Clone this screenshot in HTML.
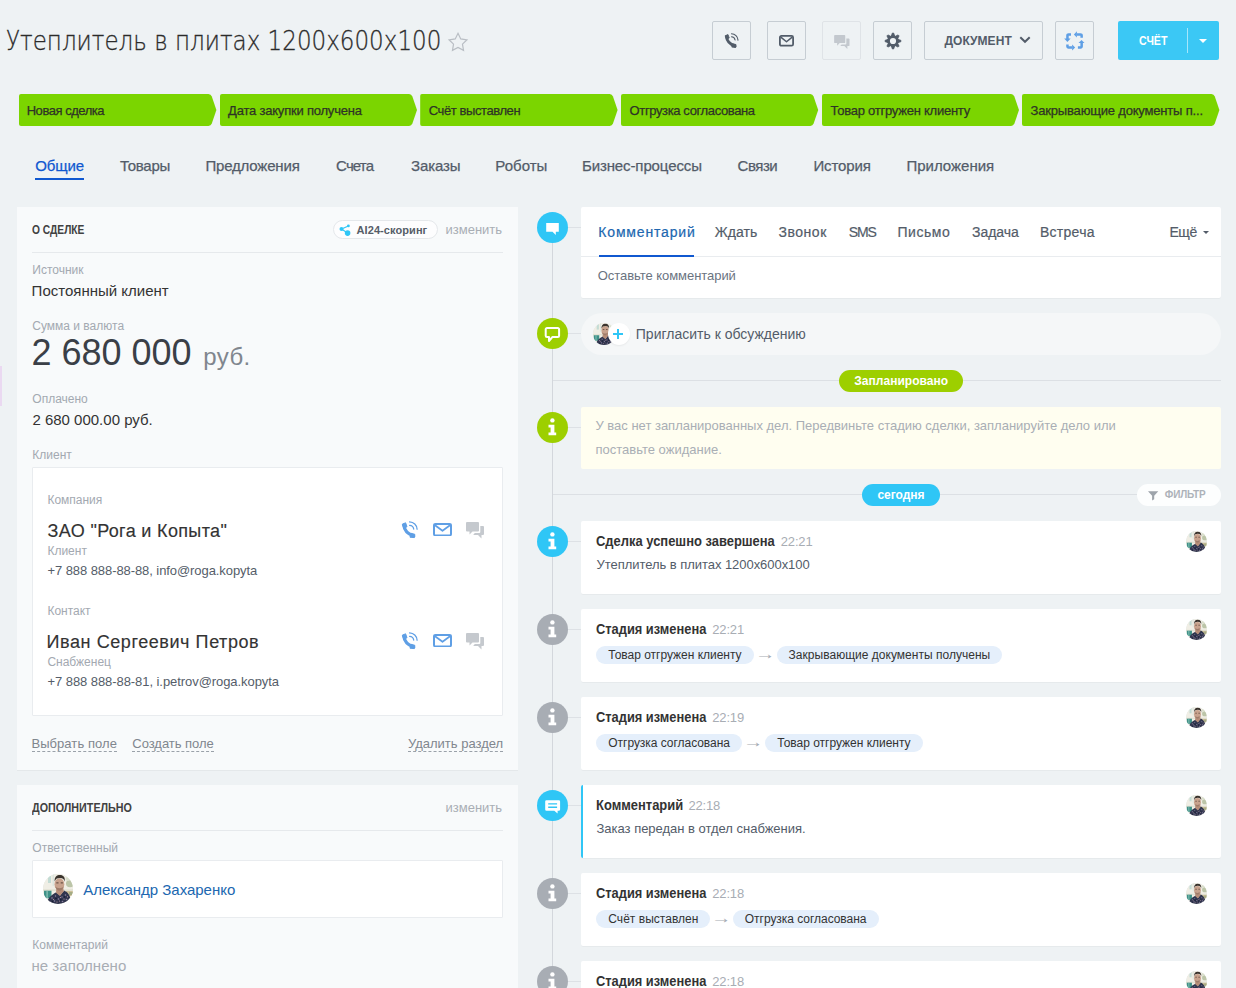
<!DOCTYPE html>
<html lang="ru">
<head>
<meta charset="utf-8">
<title>Утеплитель в плитах 1200x600x100</title>
<style>
*{box-sizing:border-box;margin:0;padding:0}
html,body{width:1236px;height:988px;overflow:hidden}
body{position:relative;background:#eef2f4;font-family:"Liberation Sans",sans-serif;color:#333}
.t{position:absolute;white-space:nowrap;display:block;font-style:normal;font-weight:400;text-decoration:none}
.a{position:absolute;display:block}
.btn{position:absolute;top:21px;height:39px;border:1px solid #c6cdd3;border-radius:2px}
.stage{position:absolute;top:94px;height:32px;width:198px;background:#7bd500;border-radius:2px 0 0 2px;clip-path:polygon(0 0,189.500px 0,191.500px .8px,192.800px 2.500px,197.400px 16px,192.800px 29.500px,191.500px 31.200px,189.500px 32px,0 32px)}
.panel{position:absolute;left:17px;width:501px;background:#f8fafb;box-shadow:0 1px 0 rgba(0,0,0,.04)}
.hr{position:absolute;left:32px;width:471px;height:1px;background:#e6e9ec}
.box{position:absolute;left:32px;width:471px;background:#fff;border:1px solid #e9ecef;border-radius:1px}
.card{position:absolute;left:581px;width:640px;background:#fff;border-radius:2px;box-shadow:0 1px 0 rgba(0,0,0,.03)}
.ic{position:absolute;left:537px;width:31px;height:31px;border-radius:50%}
.conn{position:absolute;left:568px;width:13px;height:1px;background:#dde1e5}
.hl{position:absolute;left:553px;width:668px;height:1px;background:#dce0e4}
.pill{position:absolute;border-radius:11px;height:22px}
.chip{position:absolute;height:18px;border-radius:9px;background:#e5effb}
.av{position:absolute;border-radius:50%;overflow:hidden;background:#dfe5e1}
.av svg{display:block;width:100%;height:100%}
.dash{border-bottom:1px dashed #9aa1a9}
</style>
</head>
<body>
<header>
<h1 class="t" style="left:6.15px;top:25.00px;font-size:27px;line-height:31px;color:#2b2b2b;font-weight:200;transform:scaleX(0.8527);transform-origin:0 0;font-family:'DejaVu Sans','Liberation Sans',sans-serif;-webkit-text-stroke:.3px;">Утеплитель в плитах 1200x600x100</h1>
<svg class="a" style="left:447px;top:31px" width="22" height="23" viewBox="0 0 22 23"><path d="M11.00 2.30L13.76 7.90L19.94 8.80L15.47 13.15L16.53 19.30L11.00 16.40L5.47 19.30L6.53 13.15L2.06 8.80L8.24 7.90z" fill="none" stroke="#b9bec4" stroke-width="1.200" stroke-linejoin="miter"/></svg>
<div class="btn" style="left:712px;width:39px"></div>
<svg class="a" style="left:724px;top:32.8px" width="14.80" height="15.67" viewBox="0 0 17 18"><path d="M2.800 4.200Q3.400 11.800 12.800 15.200" fill="none" stroke="#525c69" stroke-width="3.200" stroke-linecap="round"/><path d="M1.300 3.200L4.600 1.800L6 5.800L2.800 7.200zM9.700 12.200L13.800 13.300L13.200 16.600L9 16.200z" fill="#525c69" stroke="#525c69" stroke-width="1" stroke-linejoin="round"/><path d="M8.600 4.300a4.300 4.300 0 0 1 4.100 3.700M8.600 .900a7.700 7.700 0 0 1 7.500 7.300" fill="none" stroke="#525c69" stroke-width="1.3" stroke-linecap="round"/></svg>
<div class="btn" style="left:767px;width:39px"></div>
<svg class="a" style="left:779.3px;top:35px" width="15" height="11.6" viewBox="0 0 15 11.6"><rect x="0.9" y="0.9" width="13.2" height="9.799999999999999" rx="1.500" fill="none" stroke="#525c69" stroke-width="1.8"/><path d="M1.8 2.1L7.5 6.73L13.2 2.1" fill="none" stroke="#525c69" stroke-width="1.53" stroke-linejoin="round"/></svg>
<div class="btn" style="left:822px;width:39px;border-color:#dfe3e7"></div>
<svg class="a" style="left:833.5px;top:35px" width="16.5" height="14.5" viewBox="0 0 19 17"><path d="M1 0h11a1 1 0 0 1 1 1v7.500a1 1 0 0 1-1 1H6.500L3.500 12.500V9.500H1a1 1 0 0 1-1-1V1a1 1 0 0 1 1-1z" fill="#c3c8ce"/><path d="M14.300 4h2.700a1 1 0 0 1 1 1v7a1 1 0 0 1-1 1h-1.500v3.500L12 13H7.200l1.600-2H13.300a1 1 0 0 0 1-1z" fill="#c3c8ce"/></svg>
<div class="btn" style="left:873px;width:39px"></div>
<svg class="a" style="left:884px;top:32px" width="18" height="18" viewBox="-9 -9 18 18"><g fill="#525c69" stroke="#525c69" stroke-width=".8" stroke-linejoin="round"><path d="M-1.600-5l.9-2.900h1.400L1.600-5z" transform="rotate(0)"/><path d="M-1.600-5l.9-2.900h1.400L1.600-5z" transform="rotate(45)"/><path d="M-1.600-5l.9-2.900h1.400L1.600-5z" transform="rotate(90)"/><path d="M-1.600-5l.9-2.900h1.400L1.600-5z" transform="rotate(135)"/><path d="M-1.600-5l.9-2.900h1.400L1.600-5z" transform="rotate(180)"/><path d="M-1.600-5l.9-2.900h1.400L1.600-5z" transform="rotate(225)"/><path d="M-1.600-5l.9-2.900h1.400L1.600-5z" transform="rotate(270)"/><path d="M-1.600-5l.9-2.900h1.400L1.600-5z" transform="rotate(315)"/></g><circle r="4.450" fill="none" stroke="#525c69" stroke-width="2.700"/></svg>
<div class="btn" style="left:924px;width:119px"></div>
<span class="t" style="left:944.40px;top:34.00px;font-size:12px;line-height:14px;color:#535c69;font-weight:700;letter-spacing:0.052px;">ДОКУМЕНТ</span>
<svg class="a" style="left:1018px;top:35px" width="14" height="10" viewBox="0 0 14 10"><path d="M2.300 2.200L7 6.800l4.700-4.600" fill="none" stroke="#535c69" stroke-width="2"/></svg>
<div class="btn" style="left:1055px;width:39px"></div>
<svg class="a" style="left:1064px;top:31px" width="21" height="20" viewBox="0 0 21 20"><g fill="none" stroke="#5f9fe5" stroke-width="2.500"><path d="M7 3.450H4.450a1 1 0 0 0-1 1V8"/><path d="M12.900 3.450h3.750a1 1 0 0 1 1 1V6.800"/><path d="M17.650 12v3.450a1 1 0 0 1-1 1H13.900"/><path d="M3.450 13.500v1.950a1 1 0 0 0 1 1H8.100"/></g><g fill="#5f9fe5"><path d="M.2 7.500h6.400L3.400 11z"/><path d="M12.900.2v6.400L9.900 3.450z"/><path d="M14.500 12h6L17.550 9z"/><path d="M8.100 13.500v6l3-3.050z"/></g></svg>
<div class="a" style="left:1118px;top:21px;width:101px;height:39px;background:#3bc8f5;border-radius:2px"></div>
<div class="a" style="left:1187px;top:28px;width:1px;height:25px;background:rgba(255,255,255,.55)"></div>
<span class="t" style="left:1139.20px;top:34.00px;font-size:12px;line-height:14px;color:#fff;font-weight:700;transform:scaleX(0.8834);transform-origin:0 0;">СЧЁТ</span>
<div class="a" style="left:1198.500px;top:38.500px;width:0;height:0;border:4.500px solid transparent;border-top:4.500px solid #fff;border-bottom:0"></div>
</header>
<nav>
<div class="stage" style="left:19px"></div>
<span class="t" style="left:26.70px;top:103.00px;font-size:13px;line-height:15px;color:#2e3326;letter-spacing:-0.464px;-webkit-text-stroke:.25px;">Новая сделка</span>
<div class="stage" style="left:219.6px"></div>
<span class="t" style="left:228.10px;top:103.00px;font-size:13px;line-height:15px;color:#2e3326;letter-spacing:-0.209px;-webkit-text-stroke:.25px;">Дата закупки получена</span>
<div class="stage" style="left:420.2px"></div>
<span class="t" style="left:428.80px;top:103.00px;font-size:13px;line-height:15px;color:#2e3326;letter-spacing:-0.417px;-webkit-text-stroke:.25px;">Счёт выставлен</span>
<div class="stage" style="left:620.8px"></div>
<span class="t" style="left:629.60px;top:103.00px;font-size:13px;line-height:15px;color:#2e3326;letter-spacing:-0.377px;-webkit-text-stroke:.25px;">Отгрузка согласована</span>
<div class="stage" style="left:821.6px"></div>
<span class="t" style="left:830.50px;top:103.00px;font-size:13px;line-height:15px;color:#2e3326;letter-spacing:-0.241px;-webkit-text-stroke:.25px;">Товар отгружен клиенту</span>
<div class="stage" style="left:1022px"></div>
<span class="t" style="left:1030.60px;top:103.00px;font-size:13px;line-height:15px;color:#2e3326;letter-spacing:-0.184px;-webkit-text-stroke:.25px;">Закрывающие документы п...</span>
<a class="t" style="left:35.30px;top:157.00px;font-size:15px;line-height:17px;color:#1058d0;letter-spacing:-0.120px;-webkit-text-stroke:.25px;">Общие</a>
<a class="t" style="left:119.90px;top:157.00px;font-size:15px;line-height:17px;color:#535c69;letter-spacing:-0.224px;-webkit-text-stroke:.25px;">Товары</a>
<a class="t" style="left:205.40px;top:157.00px;font-size:15px;line-height:17px;color:#535c69;letter-spacing:-0.172px;-webkit-text-stroke:.25px;">Предложения</a>
<a class="t" style="left:336.10px;top:157.00px;font-size:15px;line-height:17px;color:#535c69;letter-spacing:-0.856px;-webkit-text-stroke:.25px;">Счета</a>
<a class="t" style="left:411.10px;top:157.00px;font-size:15px;line-height:17px;color:#535c69;letter-spacing:-0.149px;-webkit-text-stroke:.25px;">Заказы</a>
<a class="t" style="left:495.30px;top:157.00px;font-size:15px;line-height:17px;color:#535c69;letter-spacing:0.028px;-webkit-text-stroke:.25px;">Роботы</a>
<a class="t" style="left:581.90px;top:157.00px;font-size:15px;line-height:17px;color:#535c69;letter-spacing:-0.107px;-webkit-text-stroke:.25px;">Бизнес-процессы</a>
<a class="t" style="left:737.60px;top:157.00px;font-size:15px;line-height:17px;color:#535c69;letter-spacing:-0.483px;-webkit-text-stroke:.25px;">Связи</a>
<a class="t" style="left:813.40px;top:157.00px;font-size:15px;line-height:17px;color:#535c69;letter-spacing:-0.108px;-webkit-text-stroke:.25px;">История</a>
<a class="t" style="left:906.40px;top:157.00px;font-size:15px;line-height:17px;color:#535c69;letter-spacing:0.007px;-webkit-text-stroke:.25px;">Приложения</a>
<div class="a" style="left:35px;top:178px;width:49px;height:2px;background:#1058d0"></div>
</nav>
<aside>
<div class="a" style="left:0;top:366px;width:2px;height:40px;background:#ead9f1"></div>
<section class="panel" style="top:207px;height:563px"></section>
<span class="t" style="left:32.30px;top:223.00px;font-size:12px;line-height:14px;color:#414141;font-weight:700;transform:scaleX(0.8524);transform-origin:0 0;">О СДЕЛКЕ</span>
<div class="a" style="left:333px;top:220px;width:104.500px;height:19px;border:1px solid #e5e8eb;border-radius:10px;background:#fdfdfe"></div>
<svg class="a" style="left:338.500px;top:223.500px" width="13" height="13" viewBox="0 0 13 13"><path d="M2.500 5L9.400 1.900M2.500 5l6 4" stroke="#2fc6f6" stroke-width="1.100"/><circle cx="2.500" cy="5" r="2" fill="#2fc6f6"/><circle cx="9.400" cy="1.900" r="1.400" fill="#2fc6f6"/><circle cx="8.600" cy="9.100" r="2.800" fill="#2fc6f6"/></svg>
<span class="t" style="left:356.60px;top:224.00px;font-size:11px;line-height:12px;color:#565d68;font-weight:700;letter-spacing:0.071px;">AI24-скоринг</span>
<span class="t" style="left:445.60px;top:222.00px;font-size:13px;line-height:15px;color:#a9aeb5;letter-spacing:-0.026px;">изменить</span>
<div class="hr" style="top:252px"></div>
<span class="t" style="left:32.30px;top:263.00px;font-size:12px;line-height:14px;color:#a3a9b1;">Источник</span>
<span class="t" style="left:31.60px;top:282.00px;font-size:15px;line-height:17px;color:#333;">Постоянный клиент</span>
<span class="t" style="left:32.30px;top:319.00px;font-size:12px;line-height:14px;color:#a3a9b1;">Сумма и валюта</span>
<span class="t" style="left:31.40px;top:332.00px;font-size:36px;line-height:41px;color:#3a3f47;letter-spacing:-0.017px;">2 680 000</span>
<span class="t" style="left:203.20px;top:343.00px;font-size:24px;line-height:27px;color:#80868e;letter-spacing:0.435px;">руб.</span>
<span class="t" style="left:32.30px;top:392.00px;font-size:12px;line-height:14px;color:#a3a9b1;">Оплачено</span>
<span class="t" style="left:32.40px;top:411.00px;font-size:15px;line-height:17px;color:#333;">2 680 000.00 руб.</span>
<span class="t" style="left:32.30px;top:448.00px;font-size:12px;line-height:14px;color:#a3a9b1;">Клиент</span>
<div class="box" style="top:467px;height:249px"></div>
<span class="t" style="left:47.40px;top:493.00px;font-size:12px;line-height:14px;color:#a3a9b1;">Компания</span>
<span class="t" style="left:47.60px;top:521.00px;font-size:18px;line-height:20px;color:#333;letter-spacing:0.346px;-webkit-text-stroke:.15px;">ЗАО &quot;Рога и Копыта&quot;</span>
<span class="t" style="left:47.40px;top:544.00px;font-size:12px;line-height:14px;color:#a3a9b1;">Клиент</span>
<span class="t" style="left:47.50px;top:563.00px;font-size:13px;line-height:15px;color:#555d69;letter-spacing:-0.078px;">+7 888 888-88-88, info@roga.kopyta</span>
<span class="t" style="left:47.40px;top:604.00px;font-size:12px;line-height:14px;color:#a3a9b1;">Контакт</span>
<span class="t" style="left:46.60px;top:632.00px;font-size:18px;line-height:20px;color:#333;letter-spacing:0.571px;-webkit-text-stroke:.15px;">Иван Сергеевич Петров</span>
<span class="t" style="left:47.40px;top:655.00px;font-size:12px;line-height:14px;color:#a3a9b1;">Снабженец</span>
<span class="t" style="left:47.50px;top:674.00px;font-size:13px;line-height:15px;color:#555d69;letter-spacing:-0.066px;">+7 888 888-88-81, i.petrov@roga.kopyta</span>
<svg class="a" style="left:400.5px;top:520.5px" width="17.00" height="18.00" viewBox="0 0 17 18"><path d="M2.800 4.200Q3.400 11.800 12.800 15.200" fill="none" stroke="#5f9fe5" stroke-width="3.200" stroke-linecap="round"/><path d="M1.300 3.200L4.600 1.800L6 5.800L2.800 7.200zM9.700 12.200L13.800 13.300L13.200 16.600L9 16.200z" fill="#5f9fe5" stroke="#5f9fe5" stroke-width="1" stroke-linejoin="round"/><path d="M8.600 4.300a4.300 4.300 0 0 1 4.100 3.700M8.600 .900a7.700 7.700 0 0 1 7.500 7.300" fill="none" stroke="#5f9fe5" stroke-width="1.3" stroke-linecap="round"/></svg>
<svg class="a" style="left:433px;top:522.8px" width="19" height="13.4" viewBox="0 0 19 13.4"><rect x="1.0" y="1.0" width="17" height="11.4" rx="1.500" fill="none" stroke="#5f9fe5" stroke-width="2"/><path d="M2 2.3L9.5 7.77L17 2.3" fill="none" stroke="#5f9fe5" stroke-width="1.7" stroke-linejoin="round"/></svg>
<svg class="a" style="left:466px;top:522.0px" width="19" height="17" viewBox="0 0 19 17"><path d="M1 0h11a1 1 0 0 1 1 1v7.500a1 1 0 0 1-1 1H6.500L3.500 12.500V9.500H1a1 1 0 0 1-1-1V1a1 1 0 0 1 1-1z" fill="#c5c9ce"/><path d="M14.300 4h2.700a1 1 0 0 1 1 1v7a1 1 0 0 1-1 1h-1.500v3.500L12 13H7.200l1.600-2H13.300a1 1 0 0 0 1-1z" fill="#c5c9ce"/></svg>
<svg class="a" style="left:400.5px;top:631.5px" width="17.00" height="18.00" viewBox="0 0 17 18"><path d="M2.800 4.200Q3.400 11.800 12.800 15.200" fill="none" stroke="#5f9fe5" stroke-width="3.200" stroke-linecap="round"/><path d="M1.300 3.200L4.600 1.800L6 5.800L2.800 7.200zM9.700 12.200L13.800 13.300L13.200 16.600L9 16.200z" fill="#5f9fe5" stroke="#5f9fe5" stroke-width="1" stroke-linejoin="round"/><path d="M8.600 4.300a4.300 4.300 0 0 1 4.100 3.700M8.600 .900a7.700 7.700 0 0 1 7.500 7.300" fill="none" stroke="#5f9fe5" stroke-width="1.3" stroke-linecap="round"/></svg>
<svg class="a" style="left:433px;top:633.8px" width="19" height="13.4" viewBox="0 0 19 13.4"><rect x="1.0" y="1.0" width="17" height="11.4" rx="1.500" fill="none" stroke="#5f9fe5" stroke-width="2"/><path d="M2 2.3L9.5 7.77L17 2.3" fill="none" stroke="#5f9fe5" stroke-width="1.7" stroke-linejoin="round"/></svg>
<svg class="a" style="left:466px;top:633.0px" width="19" height="17" viewBox="0 0 19 17"><path d="M1 0h11a1 1 0 0 1 1 1v7.500a1 1 0 0 1-1 1H6.500L3.500 12.500V9.500H1a1 1 0 0 1-1-1V1a1 1 0 0 1 1-1z" fill="#c5c9ce"/><path d="M14.300 4h2.700a1 1 0 0 1 1 1v7a1 1 0 0 1-1 1h-1.500v3.500L12 13H7.200l1.600-2H13.300a1 1 0 0 0 1-1z" fill="#c5c9ce"/></svg>
<span class="t" style="left:31.40px;top:736.00px;font-size:13px;line-height:15px;color:#80868e;letter-spacing:0.069px;">Выбрать поле</span>
<div class="a dash" style="left:32px;top:751px;width:85px;height:1px"></div>
<span class="t" style="left:132.30px;top:736.00px;font-size:13px;line-height:15px;color:#80868e;letter-spacing:-0.026px;">Создать поле</span>
<div class="a dash" style="left:132px;top:751px;width:82px;height:1px"></div>
<span class="t" style="left:408.00px;top:736.00px;font-size:13px;line-height:15px;color:#80868e;letter-spacing:-0.009px;">Удалить раздел</span>
<div class="a dash" style="left:408px;top:751px;width:95px;height:1px"></div>
<section class="panel" style="top:785px;height:203px"></section>
<span class="t" style="left:32.30px;top:801.00px;font-size:12px;line-height:14px;color:#414141;font-weight:700;transform:scaleX(0.8949);transform-origin:0 0;">ДОПОЛНИТЕЛЬНО</span>
<span class="t" style="left:445.60px;top:800.00px;font-size:13px;line-height:15px;color:#a9aeb5;letter-spacing:-0.026px;">изменить</span>
<div class="hr" style="top:830px"></div>
<span class="t" style="left:32.30px;top:841.00px;font-size:12px;line-height:14px;color:#a3a9b1;">Ответственный</span>
<div class="box" style="top:860px;height:58px"></div>
<div class="av" style="left:43px;top:874px;width:30px;height:30px"><svg viewBox="0 0 30 30"><rect width="30" height="30" fill="#f0eee5"/><rect x="5" y="0" width="3" height="9" fill="#c3dcd5"/><rect x="9.500" y="0" width="1.500" height="12" fill="#dde6df"/><rect x="0" y="15.500" width="30" height="1.200" fill="#dcdccb"/><rect x="1" y="16.700" width="7.500" height="7.500" fill="#3f9187"/><rect x="3.500" y="16.700" width="1.200" height="7.500" fill="#8fc4ba"/><ellipse cx="27" cy="9.500" rx="4" ry="3.800" fill="#bcc5a8"/><ellipse cx="25" cy="5" rx="2.500" ry="2" fill="#d9dfcc"/><rect x="23" y="17" width="7" height="5" fill="#cdbf98"/><rect x="26" y="18" width="4" height="3" fill="#a4ab84"/><path d="M3.500 30C4.500 24.500 8 21 13.300 18.300L17 21.500l4-5C25 18 27.800 22 28.300 30z" fill="#30354e"/><g fill="#8e84a3"><circle cx="9" cy="24" r=".8"/><circle cx="12.500" cy="22" r=".7"/><circle cx="11.500" cy="27" r=".8"/><circle cx="15.500" cy="25" r=".8"/><circle cx="19" cy="23" r=".7"/><circle cx="22.500" cy="21" r=".8"/><circle cx="23.500" cy="25.500" r=".8"/><circle cx="19.500" cy="27.500" r=".8"/><circle cx="7" cy="28" r=".7"/><circle cx="25.500" cy="28.500" r=".7"/></g><g fill="#c39aa6"><circle cx="10.500" cy="25.500" r=".6"/><circle cx="14" cy="28" r=".6"/><circle cx="17.500" cy="23.500" r=".6"/><circle cx="21" cy="25" r=".6"/><circle cx="24.500" cy="22.800" r=".6"/><circle cx="16.500" cy="27" r=".5"/><circle cx="22" cy="28.500" r=".6"/></g><g fill="#141a33"><circle cx="13" cy="24.500" r=".8"/><circle cx="17.800" cy="25.700" r=".8"/><circle cx="21.500" cy="23" r=".7"/><circle cx="9.500" cy="27.500" r=".7"/><circle cx="25" cy="26.800" r=".7"/></g><path d="M13.300 14.500L13 18.700l4 3.300 3.700-4.800-.4-3.700z" fill="#b78d78"/><ellipse cx="16.400" cy="10.200" rx="4.900" ry="6" fill="#c8a28d"/><path d="M12.300 12.500c.8 3 2.500 4.200 4.100 4.200s3.500-1.200 4.300-4.200c-1 1.200-2.600 1.700-4.200 1.700s-3.200-.5-4.200-1.700z" fill="#9f7c6a"/><path d="M11.700 7.600C11.200 2.900 13.900 1 17 1c3.400 0 5.400 2.100 4.700 6.800-.5-2.400-1.500-3.500-4.800-3.700-3.200 0-4.400 1.100-5.200 3.500z" fill="#3a332d"/><path d="M13.300 8.900h2.200M17.700 8.900h2.200" stroke="#4a372e" stroke-width=".9"/></svg></div>
<span class="t" style="left:83.30px;top:881.00px;font-size:15px;line-height:17px;color:#2067b0;letter-spacing:-0.022px;">Александр Захаренко</span>
<span class="t" style="left:32.30px;top:938.00px;font-size:12px;line-height:14px;color:#a3a9b1;">Комментарий</span>
<span class="t" style="left:31.40px;top:957.00px;font-size:15px;line-height:17px;color:#a8adb4;letter-spacing:0.063px;">не заполнено</span>
</aside>
<main>
<div class="a" style="left:552px;top:228px;width:1px;height:760px;background:#d3d7dc"></div>
<div class="card" style="top:207px;height:91px"></div>
<div class="a" style="left:581px;top:256px;width:640px;height:1px;background:#e9ecef"></div>
<div class="conn" style="top:227px"></div>
<div class="ic" style="top:212px;background:#2fc6f6"></div>
<svg class="a" style="left:545px;top:222px" width="15" height="14" viewBox="0 0 15 14"><path d="M1.200 1h12.600v8.800h-3v3.200l-3.300-3.200H1.200z" fill="#fff"/></svg>
<a class="t" style="left:598.30px;top:224.00px;font-size:14px;line-height:16px;color:#2067b0;letter-spacing:0.834px;-webkit-text-stroke:.2px;">Комментарий</a>
<a class="t" style="left:714.70px;top:224.00px;font-size:14px;line-height:16px;color:#535c69;letter-spacing:0.078px;-webkit-text-stroke:.2px;">Ждать</a>
<a class="t" style="left:778.40px;top:224.00px;font-size:14px;line-height:16px;color:#535c69;letter-spacing:0.552px;-webkit-text-stroke:.2px;">Звонок</a>
<a class="t" style="left:848.70px;top:224.00px;font-size:14px;line-height:16px;color:#535c69;letter-spacing:-1.150px;-webkit-text-stroke:.2px;">SMS</a>
<a class="t" style="left:897.40px;top:224.00px;font-size:14px;line-height:16px;color:#535c69;letter-spacing:0.560px;-webkit-text-stroke:.2px;">Письмо</a>
<a class="t" style="left:972.00px;top:224.00px;font-size:14px;line-height:16px;color:#535c69;letter-spacing:-0.037px;-webkit-text-stroke:.2px;">Задача</a>
<a class="t" style="left:1040.00px;top:224.00px;font-size:14px;line-height:16px;color:#535c69;letter-spacing:0.258px;-webkit-text-stroke:.2px;">Встреча</a>
<a class="t" style="left:1169.40px;top:224.00px;font-size:14px;line-height:16px;color:#535c69;letter-spacing:-0.378px;-webkit-text-stroke:.2px;">Ещё</a>
<div class="a" style="left:1202.500px;top:230.500px;width:0;height:0;border:3px solid transparent;border-top:3.500px solid #535c69;border-bottom:0"></div>
<div class="a" style="left:599px;top:255px;width:95px;height:2px;background:#1058d0"></div>
<span class="t" style="left:597.80px;top:268.00px;font-size:13px;line-height:15px;color:#6a737f;letter-spacing:-0.055px;">Оставьте комментарий</span>
<div class="a" style="left:581px;top:313px;width:640px;height:42px;border-radius:21px;background:#f5f7f8"></div>
<div class="conn" style="top:333px"></div>
<div class="ic" style="top:318px;background:#9dcf00"></div>
<svg class="a" style="left:544px;top:326px" width="17" height="17" viewBox="0 0 17 17"><path d="M3 2h10.800a1.300 1.300 0 0 1 1.300 1.300v6.500a1.300 1.300 0 0 1-1.300 1.300H8.300L5 15v-3.900H3a1.300 1.300 0 0 1-1.300-1.300V3.300A1.300 1.300 0 0 1 3 2z" fill="none" stroke="#fff" stroke-width="2" stroke-linejoin="round"/></svg>
<div class="av" style="left:592.500px;top:323px;width:22px;height:22px"><svg viewBox="0 0 30 30"><rect width="30" height="30" fill="#f0eee5"/><rect x="5" y="0" width="3" height="9" fill="#c3dcd5"/><rect x="9.500" y="0" width="1.500" height="12" fill="#dde6df"/><rect x="0" y="15.500" width="30" height="1.200" fill="#dcdccb"/><rect x="1" y="16.700" width="7.500" height="7.500" fill="#3f9187"/><rect x="3.500" y="16.700" width="1.200" height="7.500" fill="#8fc4ba"/><ellipse cx="27" cy="9.500" rx="4" ry="3.800" fill="#bcc5a8"/><ellipse cx="25" cy="5" rx="2.500" ry="2" fill="#d9dfcc"/><rect x="23" y="17" width="7" height="5" fill="#cdbf98"/><rect x="26" y="18" width="4" height="3" fill="#a4ab84"/><path d="M3.500 30C4.500 24.500 8 21 13.300 18.300L17 21.500l4-5C25 18 27.800 22 28.300 30z" fill="#30354e"/><g fill="#8e84a3"><circle cx="9" cy="24" r=".8"/><circle cx="12.500" cy="22" r=".7"/><circle cx="11.500" cy="27" r=".8"/><circle cx="15.500" cy="25" r=".8"/><circle cx="19" cy="23" r=".7"/><circle cx="22.500" cy="21" r=".8"/><circle cx="23.500" cy="25.500" r=".8"/><circle cx="19.500" cy="27.500" r=".8"/><circle cx="7" cy="28" r=".7"/><circle cx="25.500" cy="28.500" r=".7"/></g><g fill="#c39aa6"><circle cx="10.500" cy="25.500" r=".6"/><circle cx="14" cy="28" r=".6"/><circle cx="17.500" cy="23.500" r=".6"/><circle cx="21" cy="25" r=".6"/><circle cx="24.500" cy="22.800" r=".6"/><circle cx="16.500" cy="27" r=".5"/><circle cx="22" cy="28.500" r=".6"/></g><g fill="#141a33"><circle cx="13" cy="24.500" r=".8"/><circle cx="17.800" cy="25.700" r=".8"/><circle cx="21.500" cy="23" r=".7"/><circle cx="9.500" cy="27.500" r=".7"/><circle cx="25" cy="26.800" r=".7"/></g><path d="M13.300 14.500L13 18.700l4 3.300 3.700-4.800-.4-3.700z" fill="#b78d78"/><ellipse cx="16.400" cy="10.200" rx="4.900" ry="6" fill="#c8a28d"/><path d="M12.300 12.500c.8 3 2.500 4.200 4.100 4.200s3.500-1.200 4.300-4.200c-1 1.200-2.600 1.700-4.200 1.700s-3.200-.5-4.200-1.700z" fill="#9f7c6a"/><path d="M11.700 7.600C11.200 2.900 13.900 1 17 1c3.400 0 5.400 2.100 4.700 6.800-.5-2.400-1.500-3.500-4.800-3.700-3.200 0-4.400 1.100-5.200 3.500z" fill="#3a332d"/><path d="M13.300 8.900h2.200M17.700 8.900h2.200" stroke="#4a372e" stroke-width=".9"/></svg></div>
<div class="a" style="left:607.500px;top:323px;width:22px;height:22px;border-radius:50%;background:#fff;box-shadow:0 1px 2px rgba(0,0,0,.06)"></div>
<div class="a" style="left:613px;top:333px;width:10px;height:2px;background:#2fc6f6"></div><div class="a" style="left:617px;top:329px;width:2px;height:10px;background:#2fc6f6"></div>
<span class="t" style="left:635.80px;top:326.00px;font-size:14px;line-height:16px;color:#535c69;">Пригласить к обсуждению</span>
<div class="hl" style="top:380px"></div>
<div class="pill" style="left:838.500px;top:370px;width:124.500px;background:#9dcf00"></div>
<span class="t" style="left:854.30px;top:374.00px;font-size:12px;line-height:14px;color:#fff;font-weight:700;letter-spacing:0.020px;">Запланировано</span>
<div class="card" style="top:407px;height:62px;background:#fffef0;box-shadow:none"></div>
<div class="conn" style="top:427px"></div>
<div class="ic" style="top:412px;background:#9dcf00"></div>
<p class="t" style="left:595.50px;top:418.00px;font-size:13px;line-height:15px;color:#a9aeb5;letter-spacing:-0.009px;">У вас нет запланированных дел. Передвиньте стадию сделки, запланируйте дело или</p>
<p class="t" style="left:595.50px;top:442.00px;font-size:13px;line-height:15px;color:#a9aeb5;">поставьте ожидание.</p>
<div class="hl" style="top:494px"></div>
<div class="pill" style="left:862px;top:484px;width:78px;background:#2fc6f6"></div>
<span class="t" style="left:877.50px;top:488.00px;font-size:12px;line-height:14px;color:#fff;font-weight:700;letter-spacing:-0.054px;">сегодня</span>
<div class="pill" style="left:1137px;top:484px;width:84px;background:#fdfefe"></div>
<svg class="a" style="left:1148px;top:490.500px" width="11" height="10" viewBox="0 0 11 10"><path d="M0 .3h10.300L6.200 4.800v3.400L4.100 9.600V4.800z" fill="#9ea4ab"/></svg>
<span class="t" style="left:1164.80px;top:489.00px;font-size:10px;line-height:11px;color:#adb2b9;font-weight:700;letter-spacing:-0.165px;">ФИЛЬТР</span>
<svg class="a" style="left:547px;top:418px" width="11" height="18" viewBox="0 0 11 18"><circle cx="5.400" cy="2.400" r="2.200" fill="#fff"/><path d="M1.500 6.800h5.900v7.700h1.800v2.800H1.500v-2.800h2.100V9.400H1.500z" fill="#fff"/></svg>
<article>
<div class="card" style="top:521px;height:73px"></div>
<div class="conn" style="top:541px"></div>
<div class="ic" style="top:526px;background:#2fc6f6"></div>
<svg class="a" style="left:547px;top:532px" width="11" height="18" viewBox="0 0 11 18"><circle cx="5.400" cy="2.400" r="2.200" fill="#fff"/><path d="M1.500 6.800h5.900v7.700h1.800v2.800H1.500v-2.800h2.100V9.400H1.500z" fill="#fff"/></svg>
<h3 class="t" style="left:596.40px;top:533.00px;font-size:14px;line-height:16px;color:#333;font-weight:700;transform:scaleX(0.9245);transform-origin:0 0;">Сделка успешно завершена</h3>
<span class="t" style="left:780.80px;top:534.00px;font-size:13px;line-height:15px;color:#a8adb4;letter-spacing:-0.175px;">22:21</span>
<div class="av" style="left:1186px;top:531px;width:21px;height:21px"><svg viewBox="0 0 30 30"><rect width="30" height="30" fill="#f0eee5"/><rect x="5" y="0" width="3" height="9" fill="#c3dcd5"/><rect x="9.500" y="0" width="1.500" height="12" fill="#dde6df"/><rect x="0" y="15.500" width="30" height="1.200" fill="#dcdccb"/><rect x="1" y="16.700" width="7.500" height="7.500" fill="#3f9187"/><rect x="3.500" y="16.700" width="1.200" height="7.500" fill="#8fc4ba"/><ellipse cx="27" cy="9.500" rx="4" ry="3.800" fill="#bcc5a8"/><ellipse cx="25" cy="5" rx="2.500" ry="2" fill="#d9dfcc"/><rect x="23" y="17" width="7" height="5" fill="#cdbf98"/><rect x="26" y="18" width="4" height="3" fill="#a4ab84"/><path d="M3.500 30C4.500 24.500 8 21 13.300 18.300L17 21.500l4-5C25 18 27.800 22 28.300 30z" fill="#30354e"/><g fill="#8e84a3"><circle cx="9" cy="24" r=".8"/><circle cx="12.500" cy="22" r=".7"/><circle cx="11.500" cy="27" r=".8"/><circle cx="15.500" cy="25" r=".8"/><circle cx="19" cy="23" r=".7"/><circle cx="22.500" cy="21" r=".8"/><circle cx="23.500" cy="25.500" r=".8"/><circle cx="19.500" cy="27.500" r=".8"/><circle cx="7" cy="28" r=".7"/><circle cx="25.500" cy="28.500" r=".7"/></g><g fill="#c39aa6"><circle cx="10.500" cy="25.500" r=".6"/><circle cx="14" cy="28" r=".6"/><circle cx="17.500" cy="23.500" r=".6"/><circle cx="21" cy="25" r=".6"/><circle cx="24.500" cy="22.800" r=".6"/><circle cx="16.500" cy="27" r=".5"/><circle cx="22" cy="28.500" r=".6"/></g><g fill="#141a33"><circle cx="13" cy="24.500" r=".8"/><circle cx="17.800" cy="25.700" r=".8"/><circle cx="21.500" cy="23" r=".7"/><circle cx="9.500" cy="27.500" r=".7"/><circle cx="25" cy="26.800" r=".7"/></g><path d="M13.300 14.500L13 18.700l4 3.300 3.700-4.800-.4-3.700z" fill="#b78d78"/><ellipse cx="16.400" cy="10.200" rx="4.900" ry="6" fill="#c8a28d"/><path d="M12.300 12.500c.8 3 2.500 4.200 4.100 4.200s3.500-1.200 4.300-4.200c-1 1.200-2.600 1.700-4.200 1.700s-3.200-.5-4.200-1.700z" fill="#9f7c6a"/><path d="M11.700 7.600C11.200 2.900 13.900 1 17 1c3.400 0 5.400 2.100 4.700 6.800-.5-2.400-1.500-3.500-4.800-3.700-3.200 0-4.400 1.100-5.200 3.500z" fill="#3a332d"/><path d="M13.300 8.900h2.200M17.700 8.900h2.200" stroke="#4a372e" stroke-width=".9"/></svg></div>
<p class="t" style="left:596.50px;top:557.00px;font-size:13px;line-height:15px;color:#535c69;letter-spacing:-0.045px;">Утеплитель в плитах 1200x600x100</p>
</article>
<article>
<div class="card" style="top:609px;height:73px"></div>
<div class="conn" style="top:629px"></div>
<div class="ic" style="top:614px;background:#a8adb4"></div>
<svg class="a" style="left:547px;top:620px" width="11" height="18" viewBox="0 0 11 18"><circle cx="5.400" cy="2.400" r="2.200" fill="#fff"/><path d="M1.500 6.800h5.900v7.700h1.800v2.800H1.500v-2.800h2.100V9.400H1.500z" fill="#fff"/></svg>
<h3 class="t" style="left:596.40px;top:621.00px;font-size:14px;line-height:16px;color:#333;font-weight:700;transform:scaleX(0.9181);transform-origin:0 0;">Стадия изменена</h3>
<span class="t" style="left:712.30px;top:622.00px;font-size:13px;line-height:15px;color:#a8adb4;letter-spacing:-0.175px;">22:21</span>
<div class="av" style="left:1186px;top:619px;width:21px;height:21px"><svg viewBox="0 0 30 30"><rect width="30" height="30" fill="#f0eee5"/><rect x="5" y="0" width="3" height="9" fill="#c3dcd5"/><rect x="9.500" y="0" width="1.500" height="12" fill="#dde6df"/><rect x="0" y="15.500" width="30" height="1.200" fill="#dcdccb"/><rect x="1" y="16.700" width="7.500" height="7.500" fill="#3f9187"/><rect x="3.500" y="16.700" width="1.200" height="7.500" fill="#8fc4ba"/><ellipse cx="27" cy="9.500" rx="4" ry="3.800" fill="#bcc5a8"/><ellipse cx="25" cy="5" rx="2.500" ry="2" fill="#d9dfcc"/><rect x="23" y="17" width="7" height="5" fill="#cdbf98"/><rect x="26" y="18" width="4" height="3" fill="#a4ab84"/><path d="M3.500 30C4.500 24.500 8 21 13.300 18.300L17 21.500l4-5C25 18 27.800 22 28.300 30z" fill="#30354e"/><g fill="#8e84a3"><circle cx="9" cy="24" r=".8"/><circle cx="12.500" cy="22" r=".7"/><circle cx="11.500" cy="27" r=".8"/><circle cx="15.500" cy="25" r=".8"/><circle cx="19" cy="23" r=".7"/><circle cx="22.500" cy="21" r=".8"/><circle cx="23.500" cy="25.500" r=".8"/><circle cx="19.500" cy="27.500" r=".8"/><circle cx="7" cy="28" r=".7"/><circle cx="25.500" cy="28.500" r=".7"/></g><g fill="#c39aa6"><circle cx="10.500" cy="25.500" r=".6"/><circle cx="14" cy="28" r=".6"/><circle cx="17.500" cy="23.500" r=".6"/><circle cx="21" cy="25" r=".6"/><circle cx="24.500" cy="22.800" r=".6"/><circle cx="16.500" cy="27" r=".5"/><circle cx="22" cy="28.500" r=".6"/></g><g fill="#141a33"><circle cx="13" cy="24.500" r=".8"/><circle cx="17.800" cy="25.700" r=".8"/><circle cx="21.500" cy="23" r=".7"/><circle cx="9.500" cy="27.500" r=".7"/><circle cx="25" cy="26.800" r=".7"/></g><path d="M13.300 14.500L13 18.700l4 3.300 3.700-4.800-.4-3.700z" fill="#b78d78"/><ellipse cx="16.400" cy="10.200" rx="4.900" ry="6" fill="#c8a28d"/><path d="M12.300 12.500c.8 3 2.500 4.200 4.100 4.200s3.500-1.200 4.300-4.200c-1 1.200-2.600 1.700-4.200 1.700s-3.200-.5-4.200-1.700z" fill="#9f7c6a"/><path d="M11.700 7.600C11.200 2.900 13.900 1 17 1c3.400 0 5.400 2.100 4.700 6.800-.5-2.400-1.500-3.500-4.800-3.700-3.200 0-4.400 1.100-5.200 3.500z" fill="#3a332d"/><path d="M13.300 8.900h2.200M17.700 8.900h2.200" stroke="#4a372e" stroke-width=".9"/></svg></div>
<div class="chip" style="left:596.3px;top:646px;width:157.3px"></div>
<span class="t" style="left:608.30px;top:648.00px;font-size:12px;line-height:14px;color:#333;letter-spacing:-0.016px;">Товар отгружен клиенту</span>
<span class="t" style="left:754.53px;top:645.00px;font-size:15px;line-height:17px;color:#a8adb4;transform:scaleX(1.3556);transform-origin:0 0;">→</span>
<div class="chip" style="left:776.6px;top:646px;width:225.0px"></div>
<span class="t" style="left:788.60px;top:648.00px;font-size:12px;line-height:14px;color:#333;letter-spacing:0.022px;">Закрывающие документы получены</span>
</article>
<article>
<div class="card" style="top:697px;height:73px"></div>
<div class="conn" style="top:717px"></div>
<div class="ic" style="top:702px;background:#a8adb4"></div>
<svg class="a" style="left:547px;top:708px" width="11" height="18" viewBox="0 0 11 18"><circle cx="5.400" cy="2.400" r="2.200" fill="#fff"/><path d="M1.500 6.800h5.900v7.700h1.800v2.800H1.500v-2.800h2.100V9.400H1.500z" fill="#fff"/></svg>
<h3 class="t" style="left:596.40px;top:709.00px;font-size:14px;line-height:16px;color:#333;font-weight:700;transform:scaleX(0.9181);transform-origin:0 0;">Стадия изменена</h3>
<span class="t" style="left:712.30px;top:710.00px;font-size:13px;line-height:15px;color:#a8adb4;letter-spacing:-0.175px;">22:19</span>
<div class="av" style="left:1186px;top:707px;width:21px;height:21px"><svg viewBox="0 0 30 30"><rect width="30" height="30" fill="#f0eee5"/><rect x="5" y="0" width="3" height="9" fill="#c3dcd5"/><rect x="9.500" y="0" width="1.500" height="12" fill="#dde6df"/><rect x="0" y="15.500" width="30" height="1.200" fill="#dcdccb"/><rect x="1" y="16.700" width="7.500" height="7.500" fill="#3f9187"/><rect x="3.500" y="16.700" width="1.200" height="7.500" fill="#8fc4ba"/><ellipse cx="27" cy="9.500" rx="4" ry="3.800" fill="#bcc5a8"/><ellipse cx="25" cy="5" rx="2.500" ry="2" fill="#d9dfcc"/><rect x="23" y="17" width="7" height="5" fill="#cdbf98"/><rect x="26" y="18" width="4" height="3" fill="#a4ab84"/><path d="M3.500 30C4.500 24.500 8 21 13.300 18.300L17 21.500l4-5C25 18 27.800 22 28.300 30z" fill="#30354e"/><g fill="#8e84a3"><circle cx="9" cy="24" r=".8"/><circle cx="12.500" cy="22" r=".7"/><circle cx="11.500" cy="27" r=".8"/><circle cx="15.500" cy="25" r=".8"/><circle cx="19" cy="23" r=".7"/><circle cx="22.500" cy="21" r=".8"/><circle cx="23.500" cy="25.500" r=".8"/><circle cx="19.500" cy="27.500" r=".8"/><circle cx="7" cy="28" r=".7"/><circle cx="25.500" cy="28.500" r=".7"/></g><g fill="#c39aa6"><circle cx="10.500" cy="25.500" r=".6"/><circle cx="14" cy="28" r=".6"/><circle cx="17.500" cy="23.500" r=".6"/><circle cx="21" cy="25" r=".6"/><circle cx="24.500" cy="22.800" r=".6"/><circle cx="16.500" cy="27" r=".5"/><circle cx="22" cy="28.500" r=".6"/></g><g fill="#141a33"><circle cx="13" cy="24.500" r=".8"/><circle cx="17.800" cy="25.700" r=".8"/><circle cx="21.500" cy="23" r=".7"/><circle cx="9.500" cy="27.500" r=".7"/><circle cx="25" cy="26.800" r=".7"/></g><path d="M13.300 14.500L13 18.700l4 3.300 3.700-4.800-.4-3.700z" fill="#b78d78"/><ellipse cx="16.400" cy="10.200" rx="4.900" ry="6" fill="#c8a28d"/><path d="M12.300 12.500c.8 3 2.500 4.200 4.100 4.200s3.500-1.200 4.300-4.200c-1 1.200-2.600 1.700-4.200 1.700s-3.200-.5-4.200-1.700z" fill="#9f7c6a"/><path d="M11.700 7.600C11.200 2.900 13.900 1 17 1c3.400 0 5.400 2.100 4.700 6.800-.5-2.400-1.500-3.500-4.800-3.700-3.200 0-4.400 1.100-5.200 3.500z" fill="#3a332d"/><path d="M13.300 8.900h2.200M17.700 8.900h2.200" stroke="#4a372e" stroke-width=".9"/></svg></div>
<div class="chip" style="left:596.3px;top:734px;width:146.0px"></div>
<span class="t" style="left:608.30px;top:736.00px;font-size:12px;line-height:14px;color:#333;letter-spacing:-0.038px;">Отгрузка согласована</span>
<span class="t" style="left:743.23px;top:733.00px;font-size:15px;line-height:17px;color:#a8adb4;transform:scaleX(1.3556);transform-origin:0 0;">→</span>
<div class="chip" style="left:765.3px;top:734px;width:157.3px"></div>
<span class="t" style="left:777.30px;top:736.00px;font-size:12px;line-height:14px;color:#333;letter-spacing:-0.016px;">Товар отгружен клиенту</span>
</article>
<article>
<div class="card" style="top:785px;height:73px"></div>
<div class="a" style="left:581px;top:785px;width:2px;height:73px;background:#2fc6f6;border-radius:2px 0 0 2px"></div>
<div class="conn" style="top:805px"></div>
<div class="ic" style="top:790px;background:#2fc6f6"></div>
<svg class="a" style="left:545px;top:799.5px" width="16" height="15" viewBox="0 0 16 15"><path d="M1.500.3h12.300a1.300 1.300 0 0 1 1.300 1.300v7.800a1.300 1.300 0 0 1-1.300 1.300H12.600v2.900L9.300 10.700H1.500A1.300 1.300 0 0 1 .2 9.400V1.600A1.300 1.300 0 0 1 1.500.3z" fill="#fff"/><path d="M3.200 3.900h8.900M3.200 7.300h8.900" stroke="#2fc6f6" stroke-width="1.400"/></svg>
<h3 class="t" style="left:596.40px;top:797.00px;font-size:14px;line-height:16px;color:#333;font-weight:700;transform:scaleX(0.9245);transform-origin:0 0;">Комментарий</h3>
<span class="t" style="left:688.40px;top:798.00px;font-size:13px;line-height:15px;color:#a8adb4;letter-spacing:-0.175px;">22:18</span>
<div class="av" style="left:1186px;top:795px;width:21px;height:21px"><svg viewBox="0 0 30 30"><rect width="30" height="30" fill="#f0eee5"/><rect x="5" y="0" width="3" height="9" fill="#c3dcd5"/><rect x="9.500" y="0" width="1.500" height="12" fill="#dde6df"/><rect x="0" y="15.500" width="30" height="1.200" fill="#dcdccb"/><rect x="1" y="16.700" width="7.500" height="7.500" fill="#3f9187"/><rect x="3.500" y="16.700" width="1.200" height="7.500" fill="#8fc4ba"/><ellipse cx="27" cy="9.500" rx="4" ry="3.800" fill="#bcc5a8"/><ellipse cx="25" cy="5" rx="2.500" ry="2" fill="#d9dfcc"/><rect x="23" y="17" width="7" height="5" fill="#cdbf98"/><rect x="26" y="18" width="4" height="3" fill="#a4ab84"/><path d="M3.500 30C4.500 24.500 8 21 13.300 18.300L17 21.500l4-5C25 18 27.800 22 28.300 30z" fill="#30354e"/><g fill="#8e84a3"><circle cx="9" cy="24" r=".8"/><circle cx="12.500" cy="22" r=".7"/><circle cx="11.500" cy="27" r=".8"/><circle cx="15.500" cy="25" r=".8"/><circle cx="19" cy="23" r=".7"/><circle cx="22.500" cy="21" r=".8"/><circle cx="23.500" cy="25.500" r=".8"/><circle cx="19.500" cy="27.500" r=".8"/><circle cx="7" cy="28" r=".7"/><circle cx="25.500" cy="28.500" r=".7"/></g><g fill="#c39aa6"><circle cx="10.500" cy="25.500" r=".6"/><circle cx="14" cy="28" r=".6"/><circle cx="17.500" cy="23.500" r=".6"/><circle cx="21" cy="25" r=".6"/><circle cx="24.500" cy="22.800" r=".6"/><circle cx="16.500" cy="27" r=".5"/><circle cx="22" cy="28.500" r=".6"/></g><g fill="#141a33"><circle cx="13" cy="24.500" r=".8"/><circle cx="17.800" cy="25.700" r=".8"/><circle cx="21.500" cy="23" r=".7"/><circle cx="9.500" cy="27.500" r=".7"/><circle cx="25" cy="26.800" r=".7"/></g><path d="M13.300 14.500L13 18.700l4 3.300 3.700-4.800-.4-3.700z" fill="#b78d78"/><ellipse cx="16.400" cy="10.200" rx="4.900" ry="6" fill="#c8a28d"/><path d="M12.300 12.500c.8 3 2.500 4.200 4.100 4.200s3.500-1.200 4.300-4.200c-1 1.200-2.600 1.700-4.200 1.700s-3.200-.5-4.200-1.700z" fill="#9f7c6a"/><path d="M11.700 7.600C11.200 2.900 13.900 1 17 1c3.400 0 5.400 2.100 4.700 6.800-.5-2.400-1.500-3.500-4.800-3.700-3.200 0-4.400 1.100-5.200 3.500z" fill="#3a332d"/><path d="M13.300 8.900h2.200M17.700 8.900h2.200" stroke="#4a372e" stroke-width=".9"/></svg></div>
<p class="t" style="left:596.50px;top:821.00px;font-size:13px;line-height:15px;color:#535c69;letter-spacing:-0.014px;">Заказ передан в отдел снабжения.</p>
</article>
<article>
<div class="card" style="top:873px;height:73px"></div>
<div class="conn" style="top:893px"></div>
<div class="ic" style="top:878px;background:#a8adb4"></div>
<svg class="a" style="left:547px;top:884px" width="11" height="18" viewBox="0 0 11 18"><circle cx="5.400" cy="2.400" r="2.200" fill="#fff"/><path d="M1.500 6.800h5.900v7.700h1.800v2.800H1.500v-2.800h2.100V9.400H1.500z" fill="#fff"/></svg>
<h3 class="t" style="left:596.40px;top:885.00px;font-size:14px;line-height:16px;color:#333;font-weight:700;transform:scaleX(0.9181);transform-origin:0 0;">Стадия изменена</h3>
<span class="t" style="left:712.30px;top:886.00px;font-size:13px;line-height:15px;color:#a8adb4;letter-spacing:-0.175px;">22:18</span>
<div class="av" style="left:1186px;top:883px;width:21px;height:21px"><svg viewBox="0 0 30 30"><rect width="30" height="30" fill="#f0eee5"/><rect x="5" y="0" width="3" height="9" fill="#c3dcd5"/><rect x="9.500" y="0" width="1.500" height="12" fill="#dde6df"/><rect x="0" y="15.500" width="30" height="1.200" fill="#dcdccb"/><rect x="1" y="16.700" width="7.500" height="7.500" fill="#3f9187"/><rect x="3.500" y="16.700" width="1.200" height="7.500" fill="#8fc4ba"/><ellipse cx="27" cy="9.500" rx="4" ry="3.800" fill="#bcc5a8"/><ellipse cx="25" cy="5" rx="2.500" ry="2" fill="#d9dfcc"/><rect x="23" y="17" width="7" height="5" fill="#cdbf98"/><rect x="26" y="18" width="4" height="3" fill="#a4ab84"/><path d="M3.500 30C4.500 24.500 8 21 13.300 18.300L17 21.500l4-5C25 18 27.800 22 28.300 30z" fill="#30354e"/><g fill="#8e84a3"><circle cx="9" cy="24" r=".8"/><circle cx="12.500" cy="22" r=".7"/><circle cx="11.500" cy="27" r=".8"/><circle cx="15.500" cy="25" r=".8"/><circle cx="19" cy="23" r=".7"/><circle cx="22.500" cy="21" r=".8"/><circle cx="23.500" cy="25.500" r=".8"/><circle cx="19.500" cy="27.500" r=".8"/><circle cx="7" cy="28" r=".7"/><circle cx="25.500" cy="28.500" r=".7"/></g><g fill="#c39aa6"><circle cx="10.500" cy="25.500" r=".6"/><circle cx="14" cy="28" r=".6"/><circle cx="17.500" cy="23.500" r=".6"/><circle cx="21" cy="25" r=".6"/><circle cx="24.500" cy="22.800" r=".6"/><circle cx="16.500" cy="27" r=".5"/><circle cx="22" cy="28.500" r=".6"/></g><g fill="#141a33"><circle cx="13" cy="24.500" r=".8"/><circle cx="17.800" cy="25.700" r=".8"/><circle cx="21.500" cy="23" r=".7"/><circle cx="9.500" cy="27.500" r=".7"/><circle cx="25" cy="26.800" r=".7"/></g><path d="M13.300 14.500L13 18.700l4 3.300 3.700-4.800-.4-3.700z" fill="#b78d78"/><ellipse cx="16.400" cy="10.200" rx="4.900" ry="6" fill="#c8a28d"/><path d="M12.300 12.500c.8 3 2.500 4.200 4.100 4.200s3.500-1.200 4.300-4.200c-1 1.200-2.600 1.700-4.200 1.700s-3.200-.5-4.200-1.700z" fill="#9f7c6a"/><path d="M11.700 7.600C11.200 2.900 13.900 1 17 1c3.400 0 5.400 2.100 4.700 6.800-.5-2.400-1.500-3.500-4.800-3.700-3.200 0-4.400 1.100-5.200 3.500z" fill="#3a332d"/><path d="M13.300 8.900h2.200M17.700 8.900h2.200" stroke="#4a372e" stroke-width=".9"/></svg></div>
<div class="chip" style="left:596.3px;top:910px;width:113.5px"></div>
<span class="t" style="left:608.30px;top:912.00px;font-size:12px;line-height:14px;color:#333;letter-spacing:0.031px;">Счёт выставлен</span>
<span class="t" style="left:710.73px;top:909.00px;font-size:15px;line-height:17px;color:#a8adb4;transform:scaleX(1.3556);transform-origin:0 0;">→</span>
<div class="chip" style="left:732.8px;top:910px;width:146.0px"></div>
<span class="t" style="left:744.80px;top:912.00px;font-size:12px;line-height:14px;color:#333;letter-spacing:-0.038px;">Отгрузка согласована</span>
</article>
<article>
<div class="card" style="top:961px;height:73px"></div>
<div class="conn" style="top:981px"></div>
<div class="ic" style="top:966px;background:#a8adb4"></div>
<svg class="a" style="left:547px;top:972px" width="11" height="18" viewBox="0 0 11 18"><circle cx="5.400" cy="2.400" r="2.200" fill="#fff"/><path d="M1.500 6.800h5.900v7.700h1.800v2.800H1.500v-2.800h2.100V9.400H1.500z" fill="#fff"/></svg>
<h3 class="t" style="left:596.40px;top:973.00px;font-size:14px;line-height:16px;color:#333;font-weight:700;transform:scaleX(0.9181);transform-origin:0 0;">Стадия изменена</h3>
<span class="t" style="left:712.30px;top:974.00px;font-size:13px;line-height:15px;color:#a8adb4;letter-spacing:-0.175px;">22:18</span>
<div class="av" style="left:1186px;top:971px;width:21px;height:21px"><svg viewBox="0 0 30 30"><rect width="30" height="30" fill="#f0eee5"/><rect x="5" y="0" width="3" height="9" fill="#c3dcd5"/><rect x="9.500" y="0" width="1.500" height="12" fill="#dde6df"/><rect x="0" y="15.500" width="30" height="1.200" fill="#dcdccb"/><rect x="1" y="16.700" width="7.500" height="7.500" fill="#3f9187"/><rect x="3.500" y="16.700" width="1.200" height="7.500" fill="#8fc4ba"/><ellipse cx="27" cy="9.500" rx="4" ry="3.800" fill="#bcc5a8"/><ellipse cx="25" cy="5" rx="2.500" ry="2" fill="#d9dfcc"/><rect x="23" y="17" width="7" height="5" fill="#cdbf98"/><rect x="26" y="18" width="4" height="3" fill="#a4ab84"/><path d="M3.500 30C4.500 24.500 8 21 13.300 18.300L17 21.500l4-5C25 18 27.800 22 28.300 30z" fill="#30354e"/><g fill="#8e84a3"><circle cx="9" cy="24" r=".8"/><circle cx="12.500" cy="22" r=".7"/><circle cx="11.500" cy="27" r=".8"/><circle cx="15.500" cy="25" r=".8"/><circle cx="19" cy="23" r=".7"/><circle cx="22.500" cy="21" r=".8"/><circle cx="23.500" cy="25.500" r=".8"/><circle cx="19.500" cy="27.500" r=".8"/><circle cx="7" cy="28" r=".7"/><circle cx="25.500" cy="28.500" r=".7"/></g><g fill="#c39aa6"><circle cx="10.500" cy="25.500" r=".6"/><circle cx="14" cy="28" r=".6"/><circle cx="17.500" cy="23.500" r=".6"/><circle cx="21" cy="25" r=".6"/><circle cx="24.500" cy="22.800" r=".6"/><circle cx="16.500" cy="27" r=".5"/><circle cx="22" cy="28.500" r=".6"/></g><g fill="#141a33"><circle cx="13" cy="24.500" r=".8"/><circle cx="17.800" cy="25.700" r=".8"/><circle cx="21.500" cy="23" r=".7"/><circle cx="9.500" cy="27.500" r=".7"/><circle cx="25" cy="26.800" r=".7"/></g><path d="M13.300 14.500L13 18.700l4 3.300 3.700-4.800-.4-3.700z" fill="#b78d78"/><ellipse cx="16.400" cy="10.200" rx="4.900" ry="6" fill="#c8a28d"/><path d="M12.300 12.500c.8 3 2.500 4.200 4.100 4.200s3.500-1.200 4.300-4.200c-1 1.200-2.600 1.700-4.200 1.700s-3.200-.5-4.200-1.700z" fill="#9f7c6a"/><path d="M11.700 7.600C11.200 2.900 13.900 1 17 1c3.400 0 5.400 2.100 4.700 6.800-.5-2.400-1.500-3.500-4.800-3.700-3.200 0-4.400 1.100-5.200 3.500z" fill="#3a332d"/><path d="M13.300 8.900h2.200M17.700 8.900h2.200" stroke="#4a372e" stroke-width=".9"/></svg></div>
</article>
</main>
</body>
</html>
